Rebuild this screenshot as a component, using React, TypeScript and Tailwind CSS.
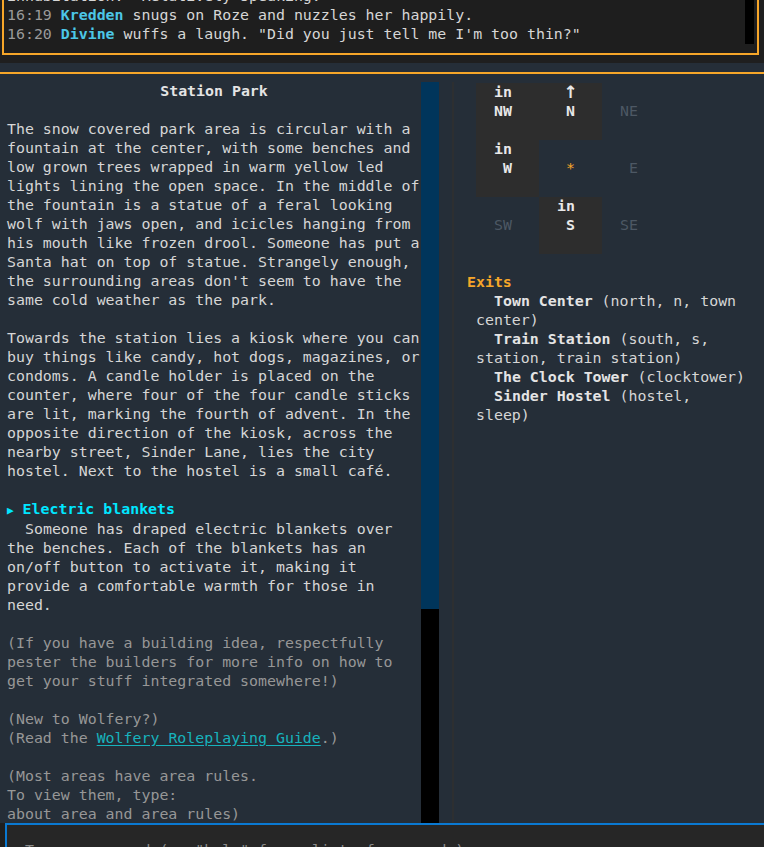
import React from 'react';

type Cell = { top: string; label: string; active: boolean; center?: boolean };

const grid: Cell[] = [
  { top: 'in ', label: 'NW ', active: true },
  { top: '↑', label: 'N', active: true },
  { top: '', label: 'NE ', active: false },
  { top: 'in ', label: 'W', active: true },
  { top: '', label: '*', active: false, center: true },
  { top: '', label: 'E', active: false },
  { top: '', label: 'SW ', active: false },
  { top: 'in ', label: 'S', active: true },
  { top: '', label: 'SE ', active: false },
];

const exits = [
  { name: 'Town Center', keys: '(north, n, town center)' },
  { name: 'Train Station', keys: '(south, s, station, train station)' },
  { name: 'The Clock Tower', keys: '(clocktower)' },
  { name: 'Sinder Hostel', keys: '(hostel, sleep)' },
];

const App: React.FC = () => {
  return (
    <div className="w-[764px] h-[847px] overflow-hidden bg-[#1f1f1f] font-['DejaVu_Sans_Mono',monospace] text-[14.9px] leading-[19px] text-[#d6d6d6]">
      {/* Chat log */}
      <div className="h-[55px] flex">
        <div className="ml-[2px] w-[757px] border-x-2 border-b-2 border-[#f6a629] bg-[#1e1e1e] flex">
          <div className="flex-1 flex flex-col justify-end pl-[3px] pb-[9px] overflow-hidden whitespace-nowrap">
            <div>inhabitation. "Relatively speaking."</div>
            <div>
              <span className="text-[#9a9a9a]">16:19 </span>
              <span className="font-bold text-[#4cc6e6]">Kredden</span> snugs on Roze and nuzzles her happily.
            </div>
            <div>
              <span className="text-[#9a9a9a]">16:20 </span>
              <span className="font-bold text-[#4cc6e6]">Divine</span> wuffs a laugh. "Did you just tell me I'm too thin?"
            </div>
          </div>
          <div className="w-[9px] h-[44px] bg-black mr-[3px]" />
        </div>
      </div>
      <div className="h-[8px] bg-[#1f1f1f]" />
      <div className="h-[9px] bg-[#252e38]" />
      <div className="h-[2px] bg-[#f6a629]" />

      {/* Room area */}
      <div className="flex h-[749px] bg-[#252e38]">
        <div className="w-[421px] shrink-0 pl-[7px] pt-[8px] overflow-hidden">
          <div className="text-center font-bold text-[#e4e4e4]">Station Park</div>
          <div className="h-[19px]" />
          <p>
            The snow covered park area is circular with a fountain at the center, with some benches and low grown trees wrapped in warm yellow led lights lining the open space. In the middle of the fountain is a statue of a feral looking wolf with jaws open, and icicles hanging from his mouth like frozen drool. Someone has put a Santa hat on top of statue. Strangely enough, the surrounding areas don't seem to have the same cold weather as the park.
          </p>
          <div className="h-[19px]" />
          <p>
            Towards the station lies a kiosk where you can buy things like candy, hot dogs, magazines, or condoms. A candle holder is placed on the counter, where four of the four candle sticks are lit, marking the fourth of advent. In the opposite direction of the kiosk, across the nearby street, Sinder Lane, lies the city hostel. Next to the hostel is a small café.
          </p>
          <div className="h-[19px]" />
          <div className="font-bold text-[#00e6ff]">
            <span className="text-[11px]">▶</span> Electric blankets
          </div>
          <p className="indent-[18px]">
            Someone has draped electric blankets over the benches. Each of the blankets has an on/off button to activate it, making it provide a comfortable warmth for those in need.
          </p>
          <div className="h-[19px]" />
          <div className="text-[#979797]">
            <p>(If you have a building idea, respectfully pester the builders for more info on how to get your stuff integrated somewhere!)</p>
            <div className="h-[19px]" />
            <p>(New to Wolfery?)</p>
            <p>
              (Read the <span className="text-[#17b3bd] underline underline-offset-2">Wolfery Roleplaying Guide</span>.)
            </p>
            <div className="h-[19px]" />
            <p>(Most areas have area rules.</p>
            <p>To view them, type:</p>
            <p>about area and area rules)</p>
          </div>
        </div>

        {/* Scrollbar */}
        <div className="mt-[8px] w-[18px] shrink-0 bg-black">
          <div className="h-[527px] bg-[#00355b]" />
        </div>
        <div className="w-[13px] shrink-0" />
        <div className="mt-[8px] w-[2px] shrink-0 bg-[#2d2f31]" />

        {/* Map and exits */}
        <div className="flex-1 pl-[13px] pr-[13px] pt-[9px]">
          <div className="ml-[9px] grid grid-cols-[63px_63px_63px] grid-rows-[57px_57px_57px] w-[189px]">
            {grid.map((c, i) => (
              <div
                key={i}
                className={`flex flex-col items-center font-bold whitespace-pre ${c.active ? 'bg-[#2d2d2d] text-[#e8e8e8]' : 'text-[#4d5864]'}`}
              >
                {c.top === '↑' ? (
                  <div className="h-[19px] font-['DejaVu_Sans',sans-serif] text-[17px] leading-[19px]">{c.top}</div>
                ) : (
                  <div className="h-[19px]">{c.top}</div>
                )}
                <div className={c.center ? 'text-[#f6a629] font-normal' : c.active ? '' : 'font-normal'}>{c.label}</div>
              </div>
            ))}
          </div>
          <div className="h-[19px]" />
          <div className="font-bold text-[#f6a629]">Exits</div>
          <div className="pl-[9px]">
            {exits.map((e) => (
              <p key={e.name} className="indent-[18px]">
                <span className="font-bold text-[#e4e4e4]">{e.name}</span> {e.keys}
              </p>
            ))}
          </div>
        </div>
      </div>

      {/* Command input */}
      <div className="ml-[5px] h-[24px] border-t-2 border-l-2 border-[#0a79d2] bg-[#262626] pl-[18px] pt-[16px] overflow-hidden whitespace-nowrap text-[#8a8a8a]">
        Type a command (or "help" for a list of commands)
      </div>
    </div>
  );
};

export default App;
